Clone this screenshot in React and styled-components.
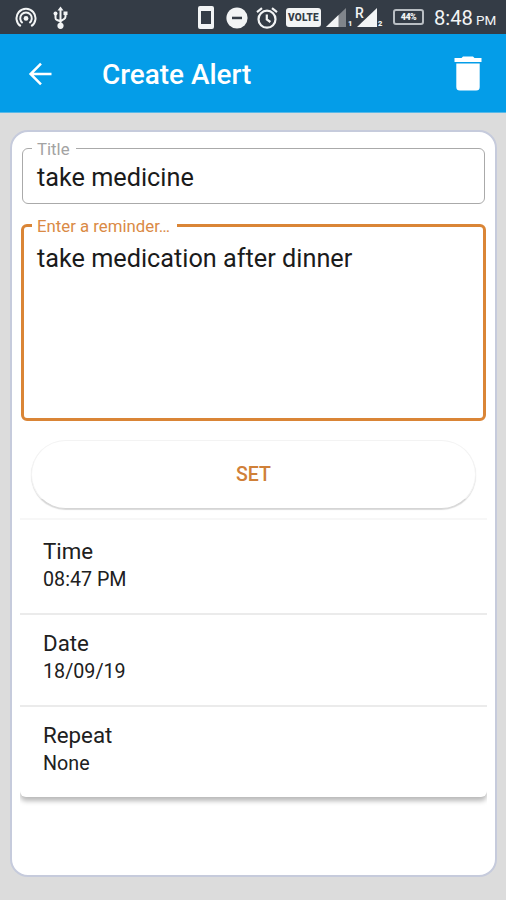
import styled, { createGlobalStyle } from "styled-components";

const GlobalStyle = createGlobalStyle`
    * {
        box-sizing: border-box;
    }

    body {
        margin: 0;
        background-color: #dcdcdc;
        font-family: Roboto, "Liberation Sans", sans-serif;
    }
`

const Screen = styled.div`
    width: 506px;
    height: 900px;
    display: flex;
    flex-direction: column;
    overflow: hidden;
    background-color: #dcdcdc;
`

const StatusBar = styled.div`
    height: 34px;
    padding: 0 10px 0 15px;
    display: flex;
    align-items: center;
    color: #f2f4f5;
    background-color: #343c46;
`

const StatusIcon = styled.svg`
    display: block;
    flex: none;
    margin-left: ${props => props.$gap || 0}px;
    margin-top: 1px;
`

const StatusSpacer = styled.div`
    flex: 1;
`

const Volte = styled.div`
    width: 35px;
    height: 19px;
    margin: 1px 0 0 8px;
    border-radius: 3px;
    color: #343c46;
    background-color: #f2f4f5;
    font-size: 10px;
    font-weight: 900;
    letter-spacing: 0.2px;
    line-height: 19px;
    text-align: center;
`

const SimNumber = styled.span`
    width: 6px;
    margin-left: ${props => props.$gap}px;
    padding-top: 14px;
    font-size: 7.5px;
    font-weight: 900;
    line-height: 10px;
`

const Roaming = styled.span`
    width: 8px;
    margin: 0 -6px 8px 1px;
    font-size: 14px;
    font-weight: 500;
    line-height: 14px;
`

const Battery = styled.div`
    width: 31px;
    height: 16px;
    margin: 0 0 0 9px;
    border: 2px solid #b9bec3;
    border-radius: 3px;
    font-size: 9px;
    font-weight: 900;
    letter-spacing: -0.6px;
    line-height: 12px;
    text-align: center;
`

const Clock = styled.div`
    width: 62px;
    margin: 3px 0 0 10px;
    font-size: 20.2px;
    line-height: 24px;
    white-space: nowrap;
`

const Meridiem = styled.span`
    margin-left: 3px;
    font-size: 13.5px;
`

const AppBar = styled.header`
    height: 79px;
    padding: 0 24px 0 28px;
    display: flex;
    align-items: center;
    color: white;
    background-color: #049de8;
    border-bottom: 1px solid #59b9e8;
`

const IconButton = styled.button`
    display: flex;
    margin-top: 1px;
    padding: 0;
    border: none;
    color: inherit;
    background: none;
`

const AppBarTitle = styled.h1`
    flex: 1;
    margin: 4px 0 0 50px;
    font-size: 27.9px;
    font-weight: 500;
    line-height: 34px;
`

const Card = styled.main`
    height: 747px;
    margin: 17px 9px 0 10px;
    padding: 7px 8px 0 8px;
    display: flex;
    flex-direction: column;
    border: 2px solid #c6cbdc;
    border-radius: 18px;
    background-color: white;
`

const Field = styled.fieldset`
    min-width: 0;
    height: ${props => props.$height}px;
    margin: ${props => props.$margin};
    padding: 0 0 0 ${props => (props.$active ? 8 : 9)}px;
    border: ${props => (props.$active ? "3px solid #da8536" : "1.5px solid #aaaaaa")};
    border-radius: 6px;
`

const FieldLabel = styled.legend`
    width: ${props => props.$width}px;
    height: 18px;
    padding: 0 5px;
    color: ${props => (props.$active ? "#da8a45" : "#a3a3a3")};
    font-size: 16.8px;
    line-height: 20px;
    white-space: nowrap;
`

const FieldText = styled.div`
    padding: ${props => props.$top}px 0 0 5px;
    color: #1b1b1b;
    font-size: 25.25px;
    line-height: 30px;
`

const SetButton = styled.button`
    height: 69px;
    margin: 19px 11px 0;
    flex: none;
    border: 1px solid #f3f3f3;
    border-bottom-color: #d5d5d5;
    border-radius: 35px;
    color: #d08038;
    background-color: white;
    box-shadow: 0 1px 1px rgba(0, 0, 0, 0.15);
    font-family: inherit;
    font-size: 19.5px;
    font-weight: 500;
`

const OptionsClip = styled.div`
    margin-top: 9px;
    padding-bottom: 12px;
    overflow: hidden;
`

const Options = styled.div`
    border-top: 2px solid #f7f7f7;
    border-radius: 0 0 6px 6px;
    box-shadow: 0 4px 5px rgba(0, 0, 0, 0.28);
`

const Option = styled.div`
    height: ${props => props.$height}px;
    padding: 0 23px 19px;
    display: flex;
    flex-direction: column;
    justify-content: flex-end;
    color: #202020;
    border-bottom: ${props => (props.$last ? "none" : "2px solid #ebebeb")};
`

const OptionName = styled.div`
    font-size: 22.3px;
    line-height: 30px;
`

const OptionValue = styled.div`
    font-size: 19.7px;
    line-height: 28px;
`

const options = [
    { name: "Time", value: "08:47 PM", height: 95 },
    { name: "Date", value: "18/09/19", height: 92 },
    { name: "Repeat", value: "None", height: 90 },
];

function HotspotIcon() {
    return (
        <StatusIcon width="22" height="22" viewBox="0 0 22 22" fill="none" stroke="currentColor" strokeWidth="2">
            <path d="M5.8 19.2A9.5 9.5 0 1 1 16.2 19.2" />
            <path d="M7.6 16A5.8 5.8 0 1 1 14.4 16" />
            <circle cx="11" cy="11.4" r="2.4" fill="currentColor" stroke="none" />
        </StatusIcon>
    );
}

function UsbIcon() {
    return (
        <StatusIcon $gap={16} width="15" height="23" viewBox="0 0 15 23" fill="none" stroke="currentColor" strokeWidth="2">
            <path d="M7.5 3V20M2.5 8V12Q2.5 13.5 4 14L7.5 15.3L11 13Q12.5 12.2 12.5 10.5V8" />
            <path d="M4.5 4.5L7.5 0.5L10.5 4.5ZM10.5 5.5H14.5V9H10.5Z" fill="currentColor" stroke="none" />
            <circle cx="2.5" cy="7.5" r="2" fill="currentColor" stroke="none" />
            <circle cx="7.5" cy="19.8" r="3.1" fill="currentColor" stroke="none" />
        </StatusIcon>
    );
}

function PhoneIcon() {
    return (
        <StatusIcon width="16" height="23" viewBox="0 0 16 23">
            <path fill="currentColor" fillRule="evenodd" d="M2 0H14Q16 0 16 2V21Q16 23 14 23H2Q0 23 0 21V2Q0 0 2 0ZM3 5V18H13V5Z" />
        </StatusIcon>
    );
}

function DoNotDisturbIcon() {
    return (
        <StatusIcon $gap={12} width="22" height="22" viewBox="0 0 22 22">
            <circle cx="11" cy="11" r="10.6" fill="currentColor" />
            <path fill="#343c46" d="M6 9.7H16V12.2H6Z" />
        </StatusIcon>
    );
}

function AlarmIcon() {
    return (
        <StatusIcon $gap={8} width="22" height="22" viewBox="0 0 22 22" fill="none" stroke="currentColor" strokeWidth="2.2">
            <circle cx="11" cy="12.2" r="8.5" />
            <path d="M1 5.2L6 1.2M21 5.2L16 1.2M10.8 7.5V12.5L14.4 15" />
        </StatusIcon>
    );
}

function SignalIcon({ gap, weak }) {
    return (
        <StatusIcon $gap={gap} width="20" height="19" viewBox="0 0 20 19">
            <path fill={weak ? "#80858b" : "currentColor"} d="M20 0V19H0Z" />
            {weak && <path fill="currentColor" d="M12.5 7V19H0Z" />}
        </StatusIcon>
    );
}

function BackIcon() {
    return (
        <svg width="24" height="24" viewBox="0 0 24 24" fill="none" stroke="currentColor" strokeWidth="2.5">
            <path d="M23.5 12H3M13 1.7L2.6 12L13 22.3" />
        </svg>
    );
}

function TrashIcon() {
    return (
        <svg width="28" height="35" viewBox="0 0 28 35" fill="currentColor">
            <path d="M0.5 2H7.5L9 0.5H19L20.5 2H27.5V6H0.5Z" />
            <path d="M2.3 7.5H25.7V31Q25.7 34.5 22.2 34.5H5.8Q2.3 34.5 2.3 31Z" />
        </svg>
    );
}

function App() {
    return (
        <Screen>
            <GlobalStyle />
            <StatusBar>
                <HotspotIcon />
                <UsbIcon />
                <StatusSpacer />
                <PhoneIcon />
                <DoNotDisturbIcon />
                <AlarmIcon />
                <Volte>VOLTE</Volte>
                <SignalIcon gap={5} weak />
                <SimNumber $gap={2}>1</SimNumber>
                <Roaming>R</Roaming>
                <SignalIcon gap={0} />
                <SimNumber $gap={1}>2</SimNumber>
                <Battery>44%</Battery>
                <Clock>
                    8:48<Meridiem>PM</Meridiem>
                </Clock>
            </StatusBar>

            <AppBar>
                <IconButton aria-label="Back">
                    <BackIcon />
                </IconButton>
                <AppBarTitle>Create Alert</AppBarTitle>
                <IconButton aria-label="Delete">
                    <TrashIcon />
                </IconButton>
            </AppBar>

            <Card>
                <Field $height={65} $margin="0 2px">
                    <FieldLabel $width={44}>Title</FieldLabel>
                    <FieldText $top={6}>take medicine</FieldText>
                </Field>

                <Field $active $height={205} $margin="12px 1px 0">
                    <FieldLabel $active $width={145}>Enter a reminder…</FieldLabel>
                    <FieldText $top={10}>take medication after dinner</FieldText>
                </Field>

                <SetButton>SET</SetButton>

                <OptionsClip>
                    <Options>
                        {options.map((option, index) => (
                            <Option key={option.name} $height={option.height} $last={index === options.length - 1}>
                                <OptionName>{option.name}</OptionName>
                                <OptionValue>{option.value}</OptionValue>
                            </Option>
                        ))}
                    </Options>
                </OptionsClip>
            </Card>
        </Screen>
    );
}

export default App;
